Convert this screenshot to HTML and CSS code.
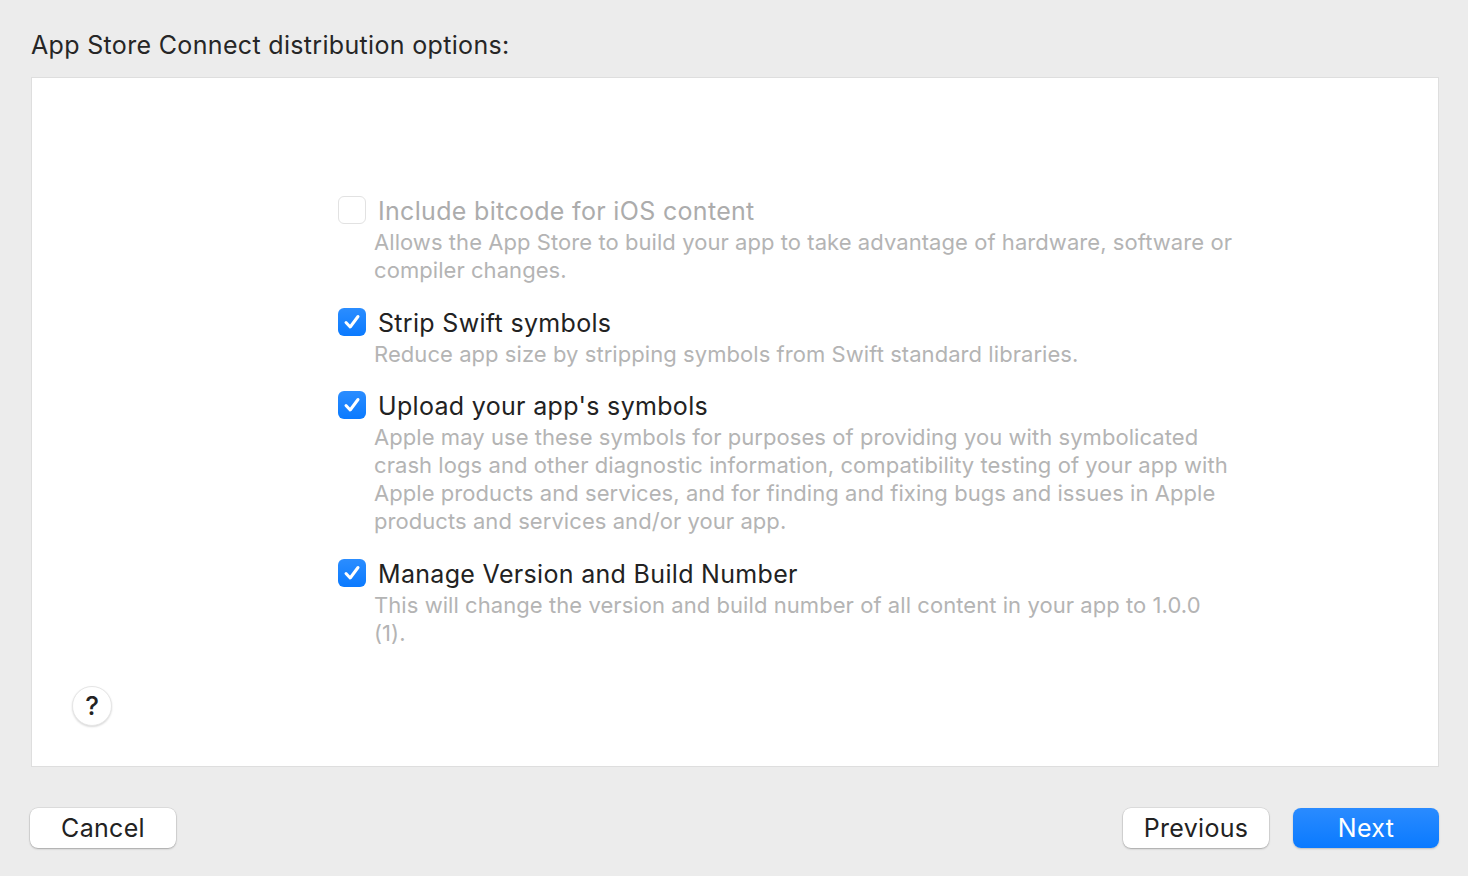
FILE: index.html
```html
<!DOCTYPE html>
<html>
<head>
<meta charset="utf-8">
<link rel="stylesheet" href="styles.css">
</head>
<body>
<div class="window">
  <h1 class="title">App Store Connect distribution options:</h1>
  <div class="panel">
    <div class="options">
      <div class="option disabled">
        <span class="box"></span>
        <div class="label">Include bitcode for iOS content</div>
        <div class="desc">Allows the App Store to build your app to take advantage of hardware, software or compiler changes.</div>
      </div>
      <div class="option">
        <span class="box checked"><svg viewBox="0 0 28 28" width="28" height="28"><path d="M8 14.5 L12.2 19 L20 8.5" fill="none" stroke="#fff" stroke-width="3" stroke-linecap="round" stroke-linejoin="round"/></svg></span>
        <div class="label">Strip Swift symbols</div>
        <div class="desc">Reduce app size by stripping symbols from Swift standard libraries.</div>
      </div>
      <div class="option">
        <span class="box checked"><svg viewBox="0 0 28 28" width="28" height="28"><path d="M8 14.5 L12.2 19 L20 8.5" fill="none" stroke="#fff" stroke-width="3" stroke-linecap="round" stroke-linejoin="round"/></svg></span>
        <div class="label">Upload your app's symbols</div>
        <div class="desc">Apple may use these symbols for purposes of providing you with symbolicated crash logs and other diagnostic information, compatibility testing of your app with Apple products and services, and for finding and fixing bugs and issues in Apple products and services and/or your app.</div>
      </div>
      <div class="option">
        <span class="box checked"><svg viewBox="0 0 28 28" width="28" height="28"><path d="M8 14.5 L12.2 19 L20 8.5" fill="none" stroke="#fff" stroke-width="3" stroke-linecap="round" stroke-linejoin="round"/></svg></span>
        <div class="label">Manage Version and Build Number</div>
        <div class="desc">This will change the version and build number of all content in your app to 1.0.0 (1).</div>
      </div>
    </div>
    <button class="help">?</button>
  </div>
  <div class="footer">
    <button class="btn">Cancel</button>
    <div class="spacer"></div>
    <button class="btn">Previous</button>
    <button class="btn primary">Next</button>
  </div>
</div>
</body>
</html>
```
FILE: styles.css
```css
* { box-sizing: border-box; }
html, body { margin: 0; padding: 0; }
body {
  background: #ececec;
  font-family: Inter, "Noto Sans", sans-serif;
  color: #222;
  width: 1468px;
  height: 876px;
  overflow: hidden;
}
.window {
  padding: 0 29px 0 31px;
}
.title {
  margin: 0;
  font-size: 25px;
  font-weight: 400;
  letter-spacing: 0.33px;
  line-height: 32px;
  padding-top: 29px;
  height: 77px;
  color: #262626;
}
.panel {
  height: 690px;
  background: #fff;
  border: 1px solid #dedede;
  display: flex;
  flex-direction: column;
  padding: 117px 0 40px 40px;
}
.options {
  margin-left: 266px;
  display: flex;
  flex-direction: column;
  gap: 22.5px;
}
.option {
  display: grid;
  grid-template-columns: 40px 860px;
  row-gap: 1px;
}
.box {
  width: 28px;
  height: 28px;
  border-radius: 6px;
  margin-top: 1px;
  border: 1px solid #d8d8d8;
  background: #fff;
  display: block;
}
.box.checked {
  border: none;
  background: linear-gradient(#2b8dff, #0a7aff);
}
.box svg { display: block; }
.label {
  font-size: 25px;
  letter-spacing: 0.32px;
  line-height: 32px;
  color: #222;
}
.desc {
  grid-column: 2;
  margin-left: -4px;
  font-size: 22px;
  letter-spacing: 0.06px;
  line-height: 28px;
  color: #b4b4b4;
}
.disabled .label { color: #acacac; }
.disabled .box { border-color: #e2e2e2; }
.help {
  margin-top: auto;
  width: 40px;
  height: 40px;
  border-radius: 50%;
  border: 1px solid #e6e6e6;
  background: #fff;
  box-shadow: 0 1px 2px rgba(0,0,0,0.15);
  font-family: Inter, sans-serif;
  font-size: 26px;
  font-weight: 500;
  color: #222;
  padding: 0;
  line-height: 38px;
}
.footer {
  display: flex;
  align-items: center;
  padding-top: 41px;
  margin-left: -1px;
  gap: 24px;
}
.spacer { flex: 1; }
.btn {
  width: 146px;
  height: 40px;
  border-radius: 8px;
  border: none;
  background: #fff;
  box-shadow: 0 0 0 0.5px rgba(0,0,0,0.12), 0 1px 2px rgba(0,0,0,0.25);
  font-family: Inter, sans-serif;
  font-size: 25px;
  letter-spacing: 0.3px;
  color: #222;
  padding: 0;
}
.btn.primary {
  background: linear-gradient(#2a8bff, #0a7aff);
  color: #fff;
  box-shadow: 0 1px 2px rgba(0,0,0,0.2);
}
```
